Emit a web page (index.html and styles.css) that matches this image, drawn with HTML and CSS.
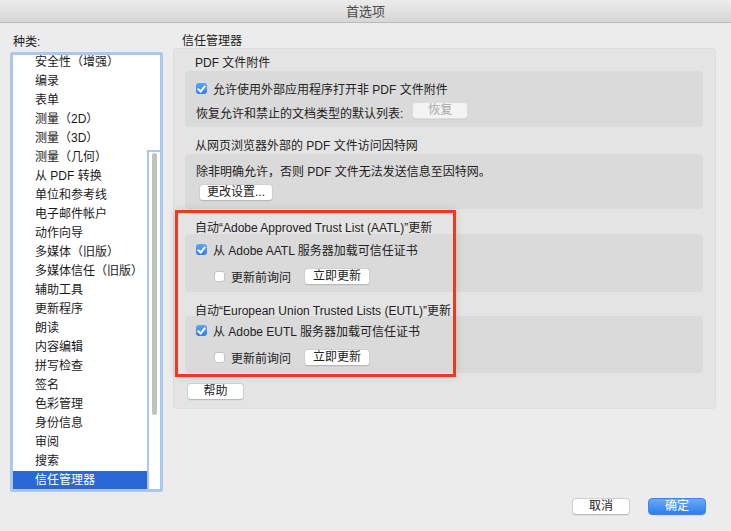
FILE: index.html
```html
<!DOCTYPE html>
<html lang="zh-CN">
<head>
    <meta charset="UTF-8">
    <title>首选项</title>
    <link rel="stylesheet" href="styles.css">
</head>
<body>
    <div class="window">
        <div class="titlebar">首选项</div>

        <div class="main">
            <div class="sidebar">
                <div class="caption">种类:</div>
                <div class="listbox">
                    <ul class="items">
                        <li>安全性（增强）</li>
                        <li>编录</li>
                        <li>表单</li>
                        <li>测量（2D）</li>
                        <li>测量（3D）</li>
                        <li>测量（几何）</li>
                        <li>从 PDF 转换</li>
                        <li>单位和参考线</li>
                        <li>电子邮件帐户</li>
                        <li>动作向导</li>
                        <li>多媒体（旧版）</li>
                        <li>多媒体信任（旧版）</li>
                        <li>辅助工具</li>
                        <li>更新程序</li>
                        <li>朗读</li>
                        <li>内容编辑</li>
                        <li>拼写检查</li>
                        <li>签名</li>
                        <li>色彩管理</li>
                        <li>身份信息</li>
                        <li>审阅</li>
                        <li>搜索</li>
                        <li class="selected">信任管理器</li>
                    </ul>
                    <div class="scrollbar">
                        <div class="track"><div class="thumb"></div></div>
                    </div>
                </div>
            </div>

            <div class="content">
                <div class="caption">信任管理器</div>
                <div class="panel">
                    <div class="section">
                        <div class="section-title">PDF 文件附件</div>
                        <div class="group g1">
                            <div class="row"><span class="check on"></span>允许使用外部应用程序打开非 PDF 文件附件</div>
                            <div class="row row-btn">
                                <span class="restore-label">恢复允许和禁止的文档类型的默认列表:</span>
                                <button class="btn restore" disabled>恢复</button>
                            </div>
                        </div>
                    </div>

                    <div class="section">
                        <div class="section-title">从网页浏览器外部的 PDF 文件访问因特网</div>
                        <div class="group g2">
                            <div class="row">除非明确允许，否则 PDF 文件无法发送信息至因特网。</div>
                            <div class="row row-btn"><button class="btn settings">更改设置...</button></div>
                        </div>
                    </div>

                    <div class="section">
                        <div class="section-title">自动“Adobe Approved Trust List (AATL)”更新</div>
                        <div class="group g3">
                            <div class="row"><span class="check on"></span>从 Adobe AATL 服务器加载可信任证书</div>
                            <div class="row row-btn indent">
                                <span class="check"></span><span class="ask">更新前询问</span>
                                <button class="btn update">立即更新</button>
                            </div>
                        </div>
                    </div>

                    <div class="section">
                        <div class="section-title">自动“European Union Trusted Lists (EUTL)”更新</div>
                        <div class="group g4">
                            <div class="row"><span class="check on"></span>从 Adobe EUTL 服务器加载可信任证书</div>
                            <div class="row row-btn indent">
                                <span class="check"></span><span class="ask">更新前询问</span>
                                <button class="btn update">立即更新</button>
                            </div>
                        </div>
                    </div>

                    <button class="btn help">帮助</button>
                </div>
            </div>
        </div>

        <div class="footer">
            <button class="btn">取消</button>
            <button class="btn primary">确定</button>
        </div>

        <!-- annotation frame drawn over the screenshot -->
        <div class="highlight"></div>
    </div>
</body>
</html>
```

FILE: styles.css
```css
*{
    box-sizing: border-box;
}
body{
    margin: 0;
    background: #ececec;
    font-family: "Liberation Sans", "Noto Sans CJK SC", sans-serif;
    font-size: 12px;
    color: #222;
}
.window{
    position: relative;
    width: 731px;
    height: 531px;
    overflow: hidden;
    background: #ececec;
}
.titlebar{
    height: 23px;
    line-height: 24px;
    text-align: center;
    font-size: 13px;
    color: #4a4a4a;
    background: linear-gradient(#ececec, #d6d6d6);
    border-bottom: 1px solid #b9b9b9;
    border-radius: 5px 5px 0 0;
}
.main{
    display: flex;
    height: 469px;
}

/* left column */
.sidebar{
    width: 153px;
    margin-left: 10px;
    padding-top: 9px;
}
.sidebar .caption{
    height: 18px;
    line-height: 20px;
    padding-left: 3px;
    color: #222;
}
.listbox{
    display: flex;
    height: 440px;
    margin-top: 2px;
    background: #fff;
    border: 3px solid #a9c7f0;
    border-radius: 2px;
    overflow: hidden;
}
.items{
    flex: 1;
    margin: -2px 0 0;
    padding: 0;
    list-style: none;
}
.items li{
    height: 19px;
    line-height: 19px;
    padding-left: 22px;
    white-space: nowrap;
    color: #1a1a1a;
}
.items li.selected{
    background: #2a68d4;
    color: #fff;
}
.scrollbar{
    width: 13px;
    padding-top: 95px;
}
.track{
    height: 345px;
    border-left: 2px solid #a9c7f0;
    border-top: 2px solid #a9c7f0;
    padding: 1px 0 0 3px;
}
.thumb{
    width: 5px;
    height: 262px;
    background: #c2c2c2;
    border-radius: 3px;
}

/* right column */
.content{
    margin-left: 10px;
    width: 543px;
    padding-top: 9px;
}
.content .caption{
    height: 16px;
    line-height: 18px;
    padding-left: 9px;
    color: #222;
}
.panel{
    height: 361px;
    background: #e4e4e4;
    border: 1px solid #dcdcdc;
    border-radius: 4px;
    padding: 5px 12px 0 11px;
}
.section{
    margin-bottom: 10px;
}
.section-title{
    height: 16px;
    line-height: 19px;
    padding-left: 10px;
    color: #222;
}
.group{
    background: #dadada;
    border-radius: 4px;
    padding: 8px 11px 0;
}
.g1{ height: 56px; margin-top: 1px; }
.g2{ height: 55px; margin-top: 1px; padding-top: 7px; }
.g3{ height: 58px; margin-top: -1px; padding-top: 6px; }
.g4{ height: 57px; margin-top: -2px; padding-top: 5px; }
.row{
    display: flex;
    align-items: center;
    height: 18px;
    white-space: nowrap;
}
.row-btn{
    margin-top: 4px;
}
.g3 .row-btn,
.g4 .row-btn{
    margin-top: 9px;
}
.restore-label{
    margin-top: 4px;
}
.indent{
    padding-left: 18px;
}
.check{
    width: 11px;
    height: 11px;
    margin-right: 6px;
    border: 1px solid #c4c4c4;
    border-radius: 3px;
    background: #fff;
    flex-shrink: 0;
}
.check.on{
    border: none;
    background: linear-gradient(#5aa6f7, #2f80ee);
    position: relative;
}
.check.on::after{
    content: "";
    position: absolute;
    left: 3px;
    top: 1px;
    width: 3px;
    height: 6px;
    border: solid #fff;
    border-width: 0 2px 2px 0;
    transform: rotate(40deg);
}

/* buttons */
.btn{
    height: 17px;
    padding: 0;
    font-family: "Liberation Sans", "Noto Sans CJK SC", sans-serif;
    font-size: 12px;
    line-height: 15px;
    color: #222;
    background: #fff;
    border: 1px solid #cfcfcf;
    border-bottom-color: #b9b9b9;
    border-radius: 4px;
    box-shadow: 0 1px 0 rgba(0,0,0,0.04);
}
.restore{
    width: 56px;
    margin-left: 9px;
    color: #a8a8a8;
    background: #f3f3f3;
    border-color: #dedede;
}
.settings{
    width: 74px;
    margin-left: 3px;
}
.update{
    width: 66px;
    margin-left: 13px;
}
.help{
    display: block;
    width: 57px;
    margin: 3px 0 0 2px;
}
.footer{
    display: flex;
    justify-content: flex-end;
    gap: 18px;
    padding: 6px 25px 0 0;
}
.footer .btn{
    width: 58px;
}
.footer .primary{
    color: #fff;
    background: linear-gradient(#6aaaf8, #2c7ef0);
    border-color: #3f84ea;
}

.highlight{
    position: absolute;
    left: 175px;
    top: 210px;
    width: 281px;
    height: 167px;
    border: 3px solid #ec3a1f;
    box-shadow: 0 0 8px rgba(0,0,0,0.12);
}
```
